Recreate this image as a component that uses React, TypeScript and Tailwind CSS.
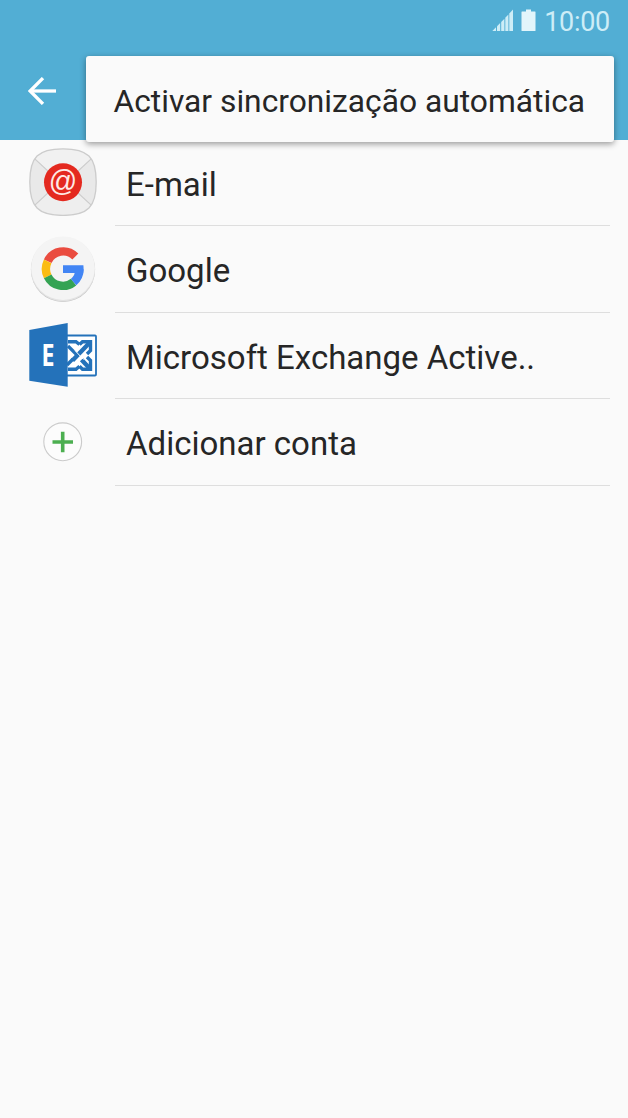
import React from "react";

function SignalIcon() {
  return (
    <svg width="22" height="24" viewBox="0 0 22 24" fill="#cdedf7">
      <path d="M0.3 23 L4 19.2 V23 Z" />
      <path d="M5 18.2 L8.2 15 V23 H5 Z" />
      <path d="M9.2 14 L12.4 10.8 V23 H9.2 Z" />
      <path d="M13.3 9.8 L16.4 6.5 V23 H13.3 Z" />
      <path d="M17.3 5.5 L21 1.5 V23 H17.3 Z" />
    </svg>
  );
}

function BatteryIcon() {
  return (
    <svg width="15" height="24" viewBox="0 0 15 24" fill="#e2f5fb">
      <path d="M5 1.5 H10 V3.5 H14 Q14.5 3.5 14.5 4 V22.5 Q14.5 23 14 23 H1 Q0.5 23 0.5 22.5 V4 Q0.5 3.5 1 3.5 H5 Z" />
    </svg>
  );
}

function BackIcon() {
  return (
    <svg width="28" height="28" viewBox="0 0 28 28" fill="none" stroke="#fff" strokeWidth="3.3">
      <path d="M28 14 H2.5" />
      <path d="M15 1.1 L2.1 14 L15 26.9" />
    </svg>
  );
}

const envelope = "M34 0.8 C59 0.8 67.2 9 67.2 34 C67.2 59 59 67.4 34 67.4 C9 67.4 0.8 59 0.8 34 C0.8 9 9 0.8 34 0.8 Z";

function EmailIcon() {
  return (
    <svg width="68" height="68" viewBox="0 0 68 68">
      <clipPath id="envelope">
        <path d={envelope} />
      </clipPath>
      <g clipPath="url(#envelope)">
        <rect width="68" height="68" fill="#e9e9e9" />
        <path d="M-6 0 H74 L34 37 Z" fill="#f1f1f1" />
        <path d="M-6 68 H74 L34 31 Z" fill="#eeeeee" />
        <path d="M-6 0 L34 37 L74 0 M-6 68 L34 31 L74 68" fill="none" stroke="#cccccc" strokeWidth="1.2" />
      </g>
      <path d={envelope} fill="none" stroke="#cccccc" strokeWidth="1.3" />
      <circle cx="34" cy="34.3" r="19" fill="#e4291f" />
      <text
        x="19.8"
        y="43"
        fontFamily="Liberation Sans, sans-serif"
        fontSize="29"
        fill="#ffe9e6"
        textLength="28.5"
        lengthAdjust="spacingAndGlyphs"
      >
        @
      </text>
    </svg>
  );
}

function GoogleIcon() {
  return (
    <svg width="68" height="68" viewBox="0 0 68 68">
      <circle cx="34" cy="35" r="32" fill="#c4c4c4" />
      <circle cx="34" cy="34.2" r="32.2" fill="#e2e2e2" />
      <circle cx="34" cy="33.2" r="31.8" fill="#f4f4f4" />
      <g fill="none" strokeWidth="8.4">
        <path d="M46.3 21.5 A17 17 0 0 0 18.7 26.3" stroke="#ea4c40" />
        <path d="M18.7 26.3 A17 17 0 0 0 18.7 41.3" stroke="#fbbc12" />
        <path d="M18.7 41.3 A17 17 0 0 0 44.6 47.1" stroke="#34a353" />
        <path d="M44.6 47.1 A17 17 0 0 0 50.5 34.3" stroke="#4285f4" />
      </g>
      <path d="M34 30.2 H54.4 Q54.9 34 54.2 38 H34 Z" fill="#4285f4" />
    </svg>
  );
}

function ExchangeIcon() {
  return (
    <svg width="68" height="68" viewBox="0 0 68 68">
      <rect x="30" y="14.5" width="37" height="40" rx="1" fill="#fff" stroke="#2472ba" strokeWidth="1.8" />
      {/* Pinwheel of four hooked arms */}
      <g fill="none" stroke="#2472ba" strokeWidth="3.4">
        <path d="M50.5 23.5 L53.5 20.7 H61.5 V29.5 L58 33" />
        <path d="M61.5 20.7 L43.5 39.5" strokeWidth="4.4" />
        <path d="M50.5 45.3 L53.5 48.2 H61.5 V39.5 L58 36" />
        <path d="M61.5 48.2 L52.5 38.8" strokeWidth="4.4" />
        <path d="M50.5 23.5 L47 20.7 H39" />
        <path d="M39 25 L49 35" strokeWidth="3.2" />
        <path d="M50.5 45.3 L47 48.2 H39" />
        <path d="M38 44 L44 38" />
      </g>
      <path d="M46 29.5 L54.5 38.5" stroke="#fff" strokeWidth="1" />
      <path d="M0.3 9 L38.7 2 V65.7 L0.3 59.7 Z" fill="#2472ba" />
      <text
        x="12.6"
        y="45"
        fontFamily="Open Sans, sans-serif"
        fontSize="31"
        fontWeight="700"
        fill="#fff"
        textLength="13"
        lengthAdjust="spacingAndGlyphs"
      >
        E
      </text>
    </svg>
  );
}

function AddIcon() {
  return (
    <svg width="68" height="68" viewBox="0 0 68 68">
      <circle cx="33.7" cy="33.8" r="18.9" fill="#fcfcfc" stroke="#cbcbcb" strokeWidth="1.1" />
      <path d="M33.7 23.7 V44.2 M23.5 34 H44" stroke="#4caf50" strokeWidth="3.6" />
    </svg>
  );
}

const accounts = [
  { label: "E-mail", icon: <EmailIcon />, height: "h-[86px]", iconTop: "pt-2" },
  { label: "Google", icon: <GoogleIcon />, height: "h-[87px]", iconTop: "pt-[9px]" },
  { label: "Microsoft Exchange Active..", icon: <ExchangeIcon />, height: "h-[86px]", iconTop: "pt-2" },
  { label: "Adicionar conta", icon: <AddIcon />, height: "h-[87px]", iconTop: "pt-[9px]" },
];

export default function App() {
  return (
    <div className="relative w-full h-[1118px] bg-[#fafafa] text-[#262626] font-['Roboto',sans-serif] overflow-hidden">
      <header className="h-[140px] bg-[#52aed4] flex flex-col">
        {/* Status bar */}
        <div className="h-11 pr-[18px] flex items-center justify-end text-[#cdedf7]">
          <div className="flex items-center pb-1">
            <SignalIcon />
            <span className="ml-[7px]">
              <BatteryIcon />
            </span>
          </div>
          <span className="ml-2 text-[27px] leading-none tracking-[-0.3px]">10:00</span>
        </div>
        <div className="flex-1 pl-7 pb-0.5 flex items-center">
          <button type="button" aria-label="Voltar">
            <BackIcon />
          </button>
        </div>
      </header>

      <ul>
        {accounts.map((account) => (
          <li key={account.label} className={`${account.height} pl-[29px] pr-[18px] flex`}>
            <div className={`w-[86px] shrink-0 ${account.iconTop}`}>{account.icon}</div>
            <div className="flex-1 pl-[11px] pt-[3px] flex items-center border-b border-[#dedede]">
              <span className="text-[33px] leading-none whitespace-nowrap">{account.label}</span>
            </div>
          </li>
        ))}
      </ul>

      {/* Overflow menu */}
      <div className="absolute left-[86px] top-14 w-[528px] h-[86px] pl-[27.5px] pt-1.5 flex items-center rounded-[3px] bg-[#fafafa] shadow-[0_2px_6px_rgba(0,0,0,0.4)]">
        <span className="text-[31.75px] leading-none whitespace-nowrap">Activar sincronização automática</span>
      </div>
    </div>
  );
}
